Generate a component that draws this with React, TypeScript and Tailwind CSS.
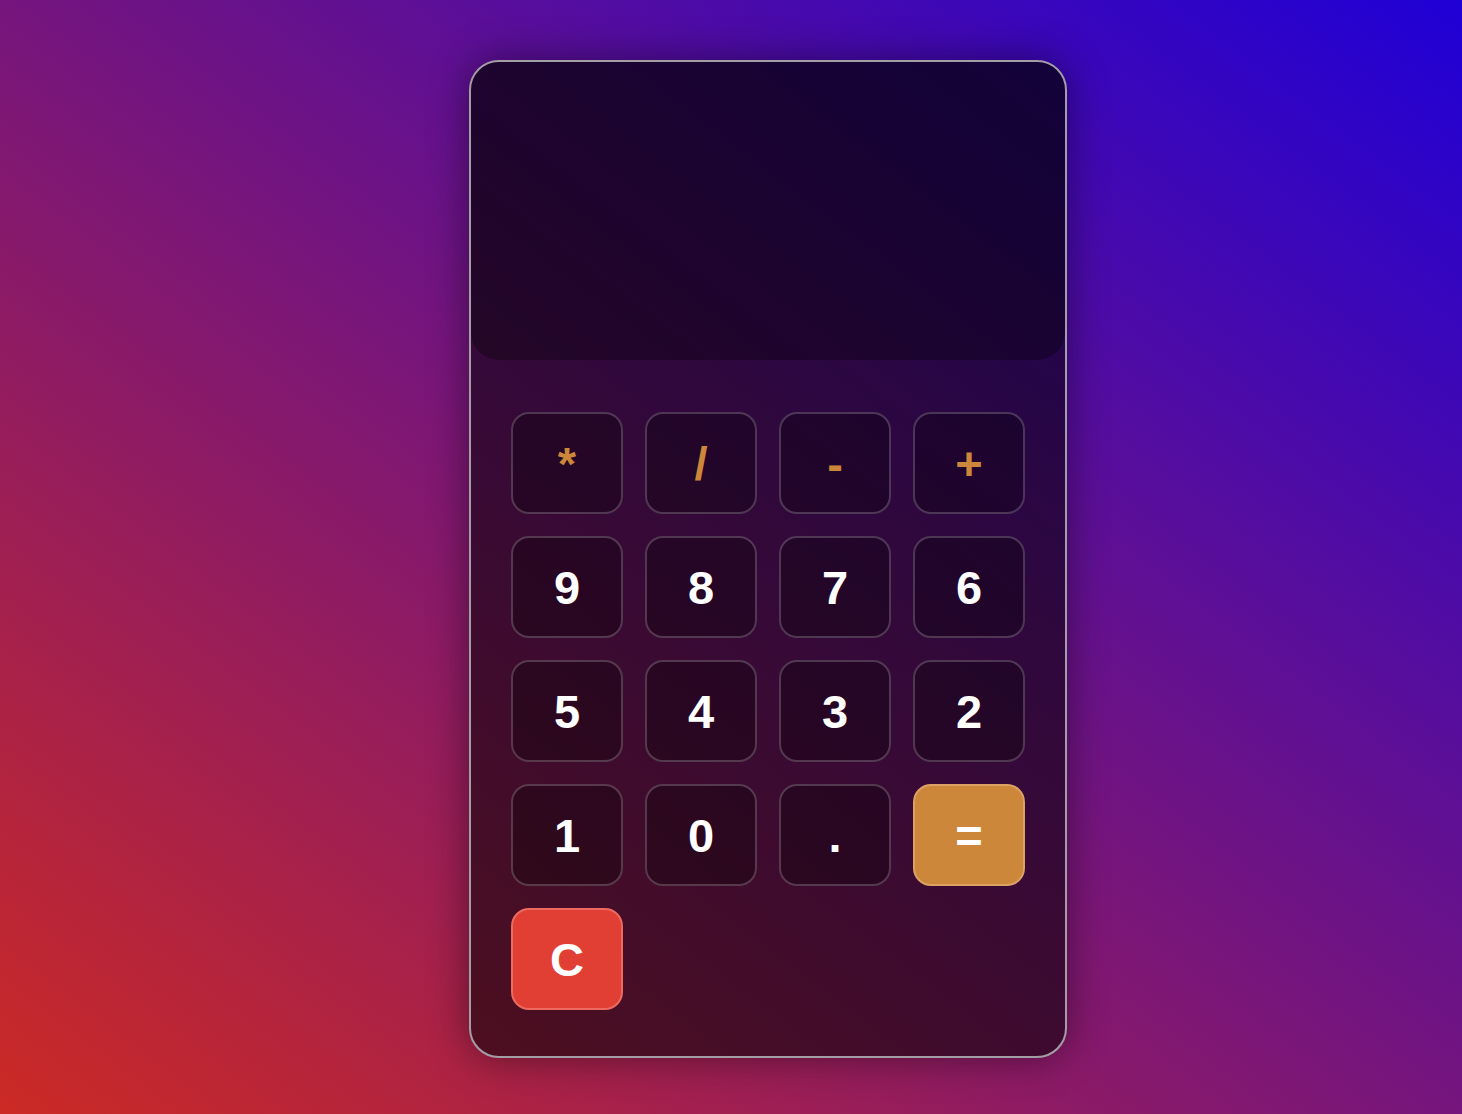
const keys: { label: string; kind: "op" | "num" | "eq" | "clear" }[] = [
  { label: "*", kind: "op" },
  { label: "/", kind: "op" },
  { label: "-", kind: "op" },
  { label: "+", kind: "op" },
  { label: "9", kind: "num" },
  { label: "8", kind: "num" },
  { label: "7", kind: "num" },
  { label: "6", kind: "num" },
  { label: "5", kind: "num" },
  { label: "4", kind: "num" },
  { label: "3", kind: "num" },
  { label: "2", kind: "num" },
  { label: "1", kind: "num" },
  { label: "0", kind: "num" },
  { label: ".", kind: "num" },
  { label: "=", kind: "eq" },
  { label: "C", kind: "clear" },
];

function keyClass(kind: string) {
  if (kind === "op") return "bg-black/30 border-white/20 text-[#cd873a]";
  if (kind === "eq") return "bg-[#cc873b] border-[#dba264] text-white";
  if (kind === "clear") return "bg-[#e13f33] border-[#ec6a5f] text-white";
  return "bg-black/30 border-white/20 text-white";
}

export default function App() {
  return (
    <div className="h-screen w-full flex pl-[469px] pt-[60px] bg-[linear-gradient(to_top_right,#cc2a24,#1f00d6)] font-['Liberation_Sans',Arial,sans-serif]">
      {/* Calculator body */}
      <div className="w-[598px] h-[998px] flex flex-col rounded-[30px] border-2 border-[#a39ea6] bg-black/55 overflow-hidden shadow-[0_0_40px_rgba(0,0,0,0.45)]">
        {/* Display */}
        <div className="h-[298px] shrink-0 bg-black/30 rounded-b-[28px]" />

        {/* Keypad */}
        <div className="grid grid-cols-[repeat(4,112px)] auto-rows-[102px] gap-[22px] px-[40px] pt-[52px]">
          {keys.map((k) => (
            <button
              key={k.label}
              className={`flex items-center justify-center rounded-[18px] border-2 text-[47px] font-bold leading-none ${keyClass(k.kind)}`}
            >
              {k.label}
            </button>
          ))}
        </div>
      </div>
    </div>
  );
}
